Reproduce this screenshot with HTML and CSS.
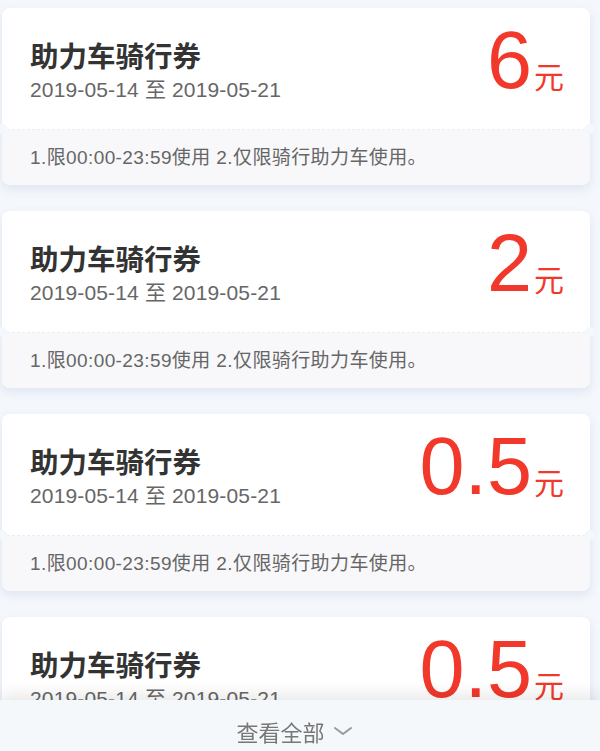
FILE: index.html
```html
<!DOCTYPE html>
<html lang="zh-CN">
<head>
    <meta charset="UTF-8">
    <meta name="viewport" content="width=device-width, initial-scale=1.0">
    <title>我的优惠券</title>
    <link rel="stylesheet" href="styles.css">
</head>
<body>

<div class="list">
    <div class="coupon">
        <div class="coupon-main">
            <div class="coupon-info">
                <div class="coupon-name">助力车骑行券</div>
                <div class="coupon-date">2019-05-14 至 2019-05-21</div>
            </div>
            <div class="coupon-amount"><span class="num">6</span><span class="unit">元</span></div>
        </div>
        <div class="coupon-rule">1.限00:00-23:59使用 2.仅限骑行助力车使用。</div>
    </div>

    <div class="coupon">
        <div class="coupon-main">
            <div class="coupon-info">
                <div class="coupon-name">助力车骑行券</div>
                <div class="coupon-date">2019-05-14 至 2019-05-21</div>
            </div>
            <div class="coupon-amount"><span class="num">2</span><span class="unit">元</span></div>
        </div>
        <div class="coupon-rule">1.限00:00-23:59使用 2.仅限骑行助力车使用。</div>
    </div>

    <div class="coupon">
        <div class="coupon-main">
            <div class="coupon-info">
                <div class="coupon-name">助力车骑行券</div>
                <div class="coupon-date">2019-05-14 至 2019-05-21</div>
            </div>
            <div class="coupon-amount"><span class="num">0.5</span><span class="unit">元</span></div>
        </div>
        <div class="coupon-rule">1.限00:00-23:59使用 2.仅限骑行助力车使用。</div>
    </div>

    <div class="coupon">
        <div class="coupon-main">
            <div class="coupon-info">
                <div class="coupon-name">助力车骑行券</div>
                <div class="coupon-date">2019-05-14 至 2019-05-21</div>
            </div>
            <div class="coupon-amount"><span class="num">0.5</span><span class="unit">元</span></div>
        </div>
        <div class="coupon-rule">1.限00:00-23:59使用 2.仅限骑行助力车使用。</div>
    </div>
</div>

<div class="more-bar">
    <span>查看全部</span>
    <svg class="arrow" width="18" height="10" viewBox="0 0 18 10">
        <polyline points="1,2 9,8 17,2" fill="none" stroke="#999" stroke-width="2" stroke-linecap="round" stroke-linejoin="round"/>
    </svg>
</div>

</body>
</html>
```

FILE: styles.css
```css
body {
    margin: 0;
    background-color: #f4f7fb;
    font-family: 'Liberation Sans', 'Noto Sans CJK SC', sans-serif;
    overflow: hidden;
}
.list {
    padding: 8px 10px 60px 2px;
}
.coupon {
    margin-bottom: 26px;
    border-radius: 8px;
    box-shadow: 0 4px 10px rgba(110, 140, 190, 0.16);
}
.coupon-main {
    height: 122px;
    box-sizing: border-box;
    padding: 0 26px 0 28px;
    background: #fff;
    border-radius: 8px 8px 0 0;
    border-bottom: 1px dashed #ececf0;
    display: flex;
    align-items: center;
    justify-content: space-between;
}
.coupon-info {
    padding-top: 6px;
}
.coupon-name {
    font-size: 28.5px;
    line-height: 36px;
    font-weight: bold;
    color: #333;
}
.coupon-date {
    font-size: 21px;
    line-height: 30px;
    letter-spacing: 0.15px;
    color: #666;
}
.coupon-amount {
    color: #f2382b;
    white-space: nowrap;
    margin-bottom: 16px;
}
.coupon-amount .num {
    font-size: 81px;
    line-height: 1;
}
.coupon-amount .unit {
    font-size: 30px;
    margin-left: 2px;
}
.coupon-rule {
    position: relative;
    height: 55px;
    line-height: 55px;
    padding-left: 28px;
    background: #f8f8fa;
    border-radius: 0 0 8px 8px;
    font-size: 19px;
    letter-spacing: 0.4px;
    color: #666;
}
.coupon-rule::before,
.coupon-rule::after {
    content: "";
    position: absolute;
    top: -6px;
    width: 10px;
    height: 10px;
    border-radius: 50%;
    background: #f4f7fb;
}
.coupon-rule::before {
    left: -5px;
}
.coupon-rule::after {
    right: -5px;
}
.more-bar {
    position: fixed;
    left: 0;
    right: 0;
    bottom: 0;
    height: 51px;
    background: #f5f8fb;
    box-shadow: 0 -6px 14px rgba(0, 0, 0, 0.09);
    display: flex;
    align-items: center;
    justify-content: center;
    gap: 9px;
    font-size: 22px;
    color: #777;
    padding: 10px 12px 0 0;
    box-sizing: border-box;
}
.arrow {
    display: block;
}
```
